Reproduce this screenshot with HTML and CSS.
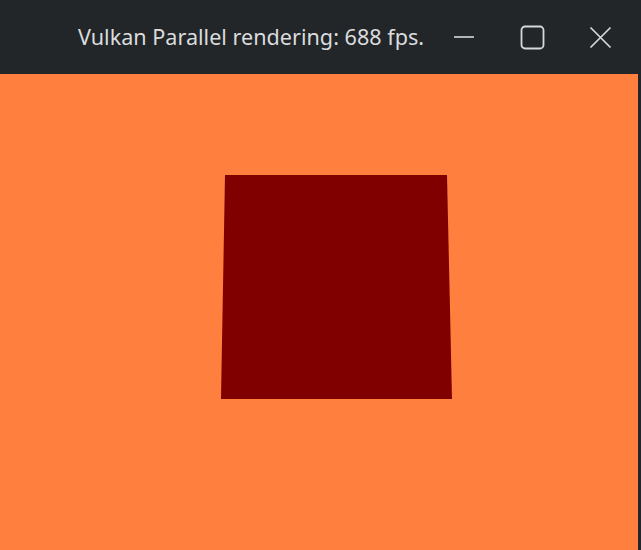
FILE: index.html
```html
<!DOCTYPE html>
<html>
<head>
<meta charset="utf-8">
<link rel="stylesheet" href="styles.css">
</head>
<body>
<div class="window">
  <header class="titlebar">
    <div class="title">Vulkan Parallel rendering: 688 fps.</div>
    <div class="controls">
      <div class="btn">
        <svg width="22" height="22" viewBox="0 0 22 22"><line x1="1" y1="11" x2="21" y2="11" stroke="#d6d8da" stroke-width="1.6"/></svg>
      </div>
      <div class="btn">
        <svg width="25" height="25" viewBox="0 0 25 25"><rect x="1.5" y="1.5" width="22" height="22" rx="3.5" fill="none" stroke="#d6d8da" stroke-width="1.8"/></svg>
      </div>
      <div class="btn">
        <svg width="23" height="23" viewBox="0 0 23 23"><path d="M1.5 1.5 L21.5 21.5 M21.5 1.5 L1.5 21.5" stroke="#d6d8da" stroke-width="1.7" fill="none"/></svg>
      </div>
    </div>
  </header>
  <main class="content">
    <div class="viewport">
      <svg class="scene" width="638" height="476" viewBox="0 0 638 476">
        <polygon points="225,101 447,101 452,325 221,325" fill="#800000"/>
      </svg>
    </div>
    <div class="edge"></div>
  </main>
</div>
</body>
</html>
```
FILE: styles.css
```css
html, body {
  margin: 0;
  padding: 0;
  background: #232629;
}
.window {
  width: 641px;
  height: 550px;
  display: flex;
  flex-direction: column;
  overflow: hidden;
}
.titlebar {
  height: 74px;
  flex: none;
  display: flex;
  align-items: center;
  background: #232629;
}
.title {
  flex: 1;
  padding-left: 78px;
  font-family: "Noto Sans", "DejaVu Sans", sans-serif;
  font-size: 21.6px;
  color: #dadcde;
  white-space: nowrap;
  line-height: 74px;
  padding-top: 0;
}
.controls {
  display: flex;
  padding-right: 7px;
  height: 74px;
}
.btn {
  width: 68px;
  display: flex;
  align-items: center;
  justify-content: center;
}
.btn svg {
  display: block;
}
.content {
  flex: 1;
  display: flex;
}
.viewport {
  width: 638px;
  height: 476px;
  background: #ff7f3f;
}
.scene {
  display: block;
}
.edge {
  flex: 1;
  background: #232629;
}
```
